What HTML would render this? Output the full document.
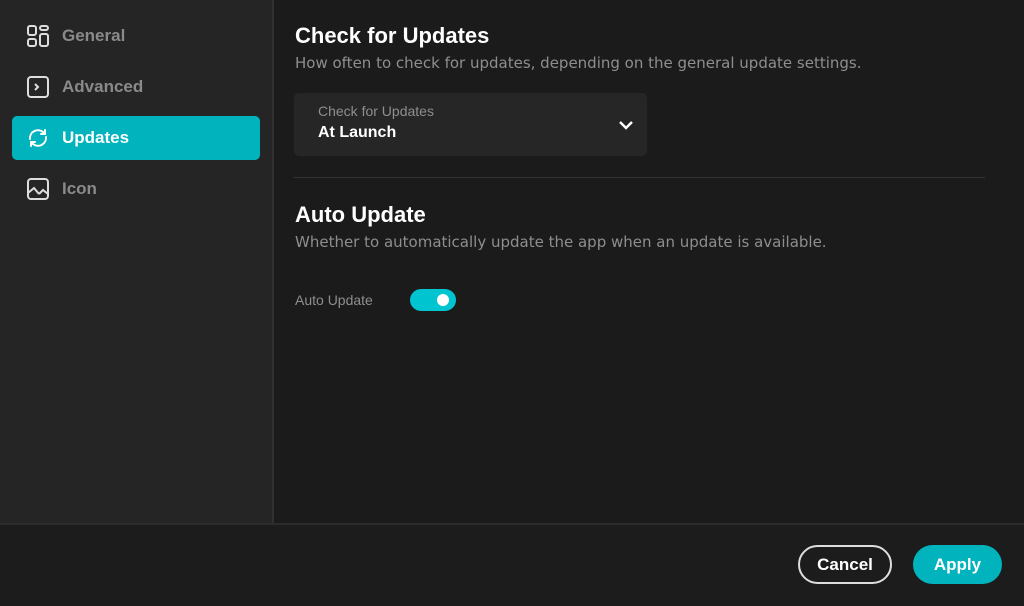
<!DOCTYPE html>
<html><head><style>
*{margin:0;padding:0;box-sizing:border-box}
body{width:1024px;height:606px;background:#1b1b1b;font-family:"Liberation Sans",sans-serif;position:relative;overflow:hidden;color:#fff}
.side{position:absolute;left:0;top:0;width:274px;height:523px;background:#252525;border-right:2px solid #303030}
.item{position:absolute;left:12px;width:248px;height:44px;border-radius:5px;display:flex;align-items:center;padding-left:14px;font-weight:bold;font-size:17px;color:#8a8a8a}
.item svg{margin-right:12px}
.item.act{background:#00b3bd;color:#fff}
.foot{position:absolute;left:0;top:523px;width:1024px;height:83px;background:#1c1c1c;border-top:2px solid #2c2c2c}
h2{position:absolute;left:295px;font-size:22px;font-weight:bold;color:#fff}
.desc{position:absolute;left:295px;font-size:15px;color:#8e8e8e;font-family:"DejaVu Sans",sans-serif}
.btn{position:absolute;top:545px;height:39px;border-radius:20px;font-weight:bold;font-size:17px;display:flex;align-items:center;justify-content:center}
</style></head><body>
<div class="side">
 <div class="item" style="top:14px"><svg width="24" height="24" viewBox="0 0 24 24" fill="none" stroke="#ddd" stroke-width="2"><rect x="2" y="2" width="8" height="9" rx="2"/><rect x="2" y="15" width="8" height="7" rx="2"/><rect x="14" y="2" width="8" height="4" rx="2"/><rect x="14" y="10" width="8" height="12" rx="2"/></svg>General</div>
 <div class="item" style="top:65px"><svg width="24" height="24" viewBox="0 0 24 24" fill="none" stroke="#ddd" stroke-width="2"><rect x="2" y="2" width="20" height="20" rx="3"/><path d="M9 9l3 3-3 3"/></svg>Advanced</div>
 <div class="item act" style="top:116px"><svg width="24" height="24" viewBox="0 0 24 24" fill="none" stroke="#fff" stroke-width="2" stroke-linecap="round"><path d="M4 13a8 8 0 0 1 13-7l2 2M19 4v4h-4"/><path d="M20 11a8 8 0 0 1-13 7l-2-2M5 20v-4h4"/></svg>Updates</div>
 <div class="item" style="top:167px"><svg width="24" height="24" viewBox="0 0 24 24" fill="none" stroke="#ddd" stroke-width="2"><rect x="2" y="2" width="20" height="20" rx="3"/><path d="M2 16l6-5 5 6M13 17l4-4 5 4"/></svg>Icon</div>
</div>
<h2 style="top:23px">Check for Updates</h2>
<div class="desc" style="top:54px">How often to check for updates, depending on the general update settings.</div>
<div style="position:absolute;left:294px;top:93px;width:353px;height:63px;background:#262626;border-radius:5px">
 <div style="position:absolute;left:24px;top:10px;font-size:14px;color:#8e8e8e">Check for Updates</div>
 <div style="position:absolute;left:24px;top:31px;font-size:16px;font-weight:bold">At Launch</div>
 <svg style="position:absolute;left:324px;top:24px" width="16" height="16" viewBox="0 0 16 16" fill="none" stroke="#fff" stroke-width="2.4"><path d="M2 5l6 6 6-6"/></svg>
</div>
<div style="position:absolute;left:294px;top:177px;width:691px;height:1px;background:#333"></div>
<h2 style="top:202px">Auto Update</h2>
<div class="desc" style="top:233px">Whether to automatically update the app when an update is available.</div>
<div style="position:absolute;left:295px;top:292px;font-size:14px;color:#8e8e8e">Auto Update</div>
<div style="position:absolute;left:410px;top:289px;width:46px;height:22px;border-radius:11px;background:#00c4d0"><div style="position:absolute;right:7px;top:5px;width:12px;height:12px;border-radius:6px;background:#fff"></div></div>
<div class="foot"></div>
<div class="btn" style="left:798px;width:94px;border:2px solid #ddd;color:#fff">Cancel</div>
<div class="btn" style="left:913px;width:89px;background:#00b3bd;color:#fff">Apply</div>
</body></html>
